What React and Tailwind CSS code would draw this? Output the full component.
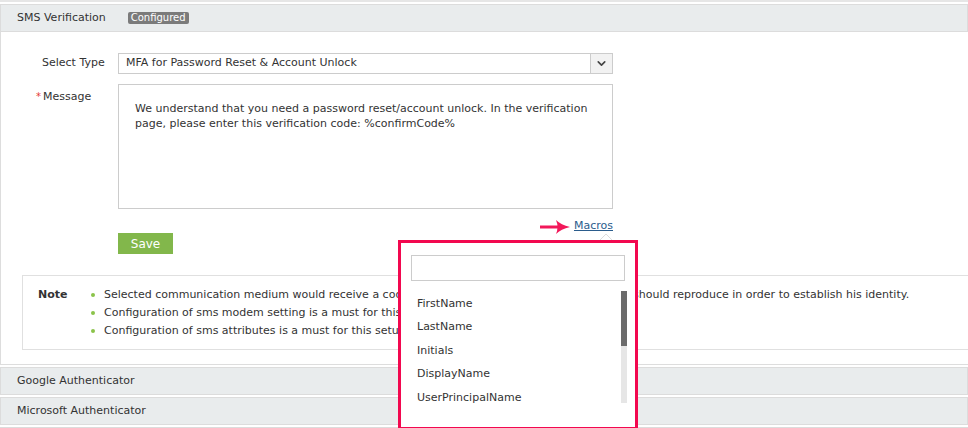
import { ChevronDown } from 'lucide-react';

const macros = ['FirstName', 'LastName', 'Initials', 'DisplayName', 'UserPrincipalName'];

const notes = [
  'Selected communication medium would receive a code from ADSelfService Plus which the user should reproduce in order to establish his identity.',
  'Configuration of sms modem setting is a must for this setup.',
  'Configuration of sms attributes is a must for this setup.',
];

function Bar({ title, children }) {
  return (
    <div className="flex h-[28px] items-center border border-[#dcdcdc] bg-[#e9eced] pl-[16px] text-[#333]">
      {title}
      {children}
    </div>
  );
}

function MacrosPopup() {
  return (
    <>
      {/* little caret pointing at the Macros link */}
      <svg className="absolute left-[598px] top-[233px]" width="16" height="8" viewBox="0 0 16 8">
        <polygon points="1,8 8,1 15,8" fill="#ffffff" stroke="#dddddd" strokeWidth="1" />
      </svg>
      <div className="absolute left-[398px] top-[240px] h-[190px] w-[240px] border-[3px] border-[#f2084f] bg-white">
        <div className="mx-[10px] mt-[12px] h-[26px] border border-[#cccccc] bg-white" />
        <div className="ml-[10px] mt-[10px] flex h-[112px] w-[216px] overflow-hidden">
          <div className="flex-1 pl-[6px] pt-[1px]">
            {macros.map((m) => (
              <div key={m} className="flex h-[23.5px] items-center text-[#333]">
                {m}
              </div>
            ))}
          </div>
          <div className="w-[6px] bg-[#e6e6e6]">
            <div className="h-[55px] bg-[#6b6b6b]" />
          </div>
        </div>
      </div>
    </>
  );
}

export default function App() {
  return (
    <div className="relative h-[428px] w-full overflow-hidden bg-white font-['DejaVu_Sans','Liberation_Sans',sans-serif] text-[11px] text-[#333]">
      <div className="h-[2px] bg-[#e6e6e6]" />
      <div className="mt-[2px]">
        <Bar title="SMS Verification">
          <span className="ml-[22px] rounded-[2px] bg-[#7b7b7b] px-[3px] text-[10px] leading-[12px] text-white">
            Configured
          </span>
        </Bar>
      </div>

      <div className="border-b border-l border-[#dddddd] pb-[14px] pt-[21px]">
        <div className="flex items-center">
          <div className="w-[117px] pl-[41px]">Select Type</div>
          <div className="flex h-[21px] w-[495px] items-center border border-[#cccccc]">
            <div className="flex-1 pl-[7px]">MFA for Password Reset &amp; Account Unlock</div>
            <div className="flex h-full w-[22px] items-center justify-center border-l border-[#cccccc] bg-[#f2f2f2]">
              <ChevronDown className="h-[13px] w-[13px] text-[#444]" strokeWidth={3} />
            </div>
          </div>
        </div>

        <div className="mt-[10px] flex">
          <div className="w-[117px] pl-[35px] pt-[5px]">
            <span className="mr-[2px] align-top text-[10px] text-[#e53935]">*</span>
            Message
          </div>
          <div className="h-[125px] w-[495px] border border-[#cccccc] pl-[16px] pt-[16px] leading-[15px]">
            We understand that you need a password reset/account unlock. In the verification
            <br />
            page, please enter this verification code: %confirmCode%
          </div>
        </div>

        <div className="ml-[117px] mt-[11px] flex h-[13px] w-[495px] items-center justify-end">
          <svg width="30" height="16" viewBox="0 0 30 16" className="mr-[4px]">
            <line x1="0" y1="8" x2="20" y2="8" stroke="#f2185a" strokeWidth="3" strokeLinecap="round" />
            <path d="M16 1 Q21 6 30 8 Q21 10 16 15 Q19 8 16 1 Z" fill="#f2185a" />
          </svg>
          <span className="text-[#2b5c8c] underline">Macros</span>
        </div>

        <button className="ml-[117px] flex h-[21px] w-[55px] items-center justify-center bg-[#82b74b] text-[12px] text-white">
          Save
        </button>

        <div className="ml-[21px] mt-[21px] flex border border-r-0 border-[#e0e0e0] pb-[9px] pt-[10px]">
          <div className="w-[68px] pl-[15px] font-bold leading-[18px] text-[#333]">Note</div>
          <ul>
            {notes.map((n) => (
              <li key={n} className="flex h-[18px] items-center whitespace-nowrap">
                <span className="mr-[9px] h-[4px] w-[4px] rounded-full bg-[#8bc34a]" />
                {n}
              </li>
            ))}
          </ul>
        </div>
      </div>

      <div className="mt-[2px]">
        <Bar title="Google Authenticator" />
      </div>
      <div className="mt-[2px]">
        <Bar title="Microsoft Authenticator" />
      </div>
      <div className="mt-[2px]">
        <Bar title="" />
      </div>

      <MacrosPopup />
    </div>
  );
}
